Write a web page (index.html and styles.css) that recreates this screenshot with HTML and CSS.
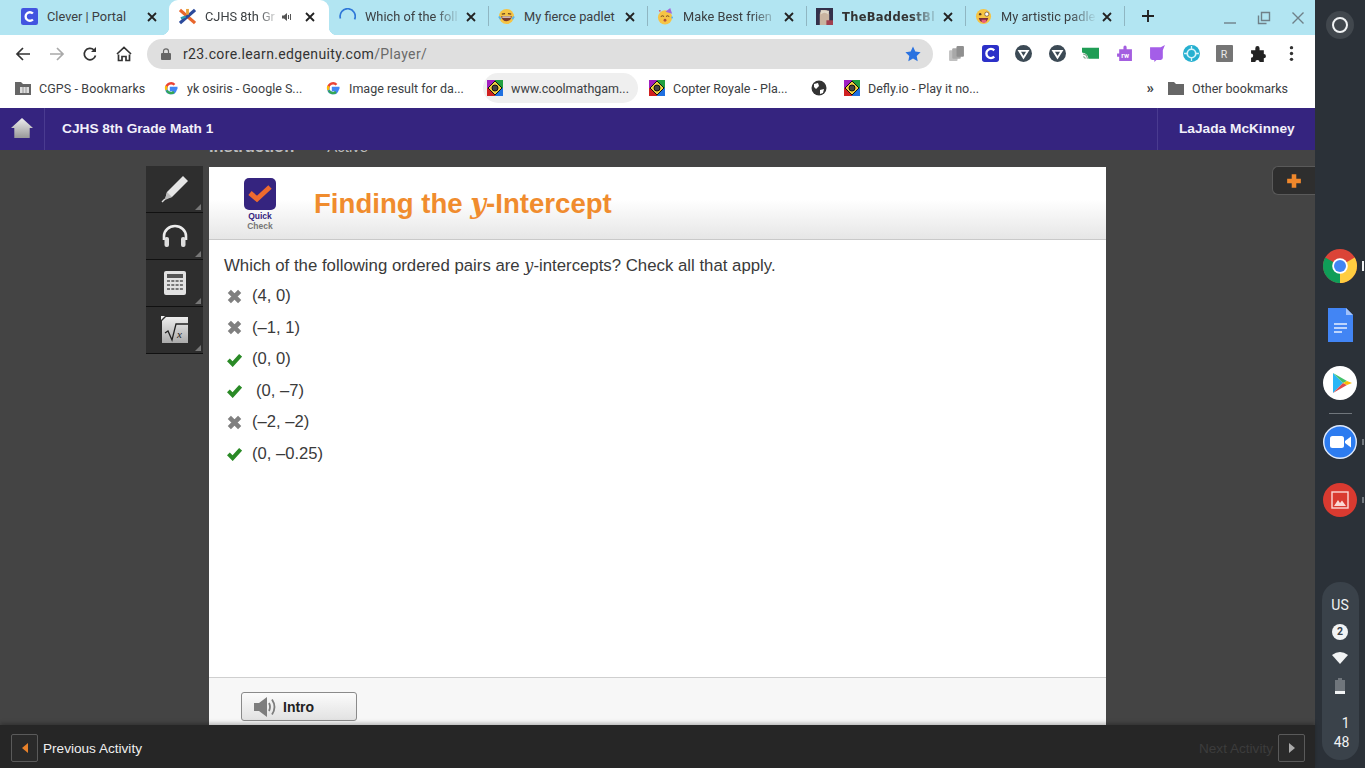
FILE: index.html
```html
<!DOCTYPE html>
<html lang="en">
<head>
<meta charset="utf-8">
<title>CJHS 8th Grade Math 1</title>
<link rel="stylesheet" href="styles.css">
</head>
<body>
<div class="screen">
  <div class="browser">
    <div class="tabstrip">
      <div class="tab first">
        <svg class="fav" viewBox="0 0 16 16"><rect width="16" height="16" rx="2" fill="#4254e0"/><path d="M11.2 5.2A4 4 0 1 0 11.2 10.8" fill="none" stroke="#fff" stroke-width="2.2"/></svg>
        <span class="tab-title">Clever | Portal</span>
        <svg class="close" viewBox="0 0 10 10"><path d="M1 1L9 9M9 1L1 9"/></svg>
      </div>
      <div class="tab active">
        <svg class="fav" viewBox="0 0 18 18"><path d="M1 2L17 16" stroke="#e8662c" stroke-width="3.4"/><path d="M17 2L1 16" stroke="#2b4a9c" stroke-width="3.4"/><path d="M9 1V7" stroke="#e8a33c" stroke-width="3"/><path d="M2 11L7 9" stroke="#2c9cb0" stroke-width="2.4"/></svg>
        <span class="tab-title short fade">CJHS 8th Gr</span>
        <svg class="speaker" viewBox="0 0 10 10"><path d="M0 3.5H2L5 1V9L2 6.5H0Z" fill="#555"/><path d="M6.5 3V7M8.5 2V8" stroke="#555" stroke-width="1"/></svg>
        <svg class="close" viewBox="0 0 10 10"><path d="M1 1L9 9M9 1L1 9"/></svg>
      </div>
      <div class="tab">
        <svg class="fav" viewBox="0 0 18 18"><path d="M1.500 11A8 8 0 1 1 16.500 12" fill="none" stroke="#2f78d8" stroke-width="1.800"/></svg>
        <span class="tab-title fade">Which of the foll</span>
        <svg class="close" viewBox="0 0 10 10"><path d="M1 1L9 9M9 1L1 9"/></svg>
      </div>
      <div class="tab sep">
        <svg class="fav" viewBox="0 0 18 18"><circle cx="9" cy="9" r="8" fill="#f6c445"/><path d="M3.5 8.5H14.5A5.5 5.5 0 0 1 3.5 8.5Z" fill="#7a3a2c"/><path d="M4.5 9H13.500V10.200H4.500Z" fill="#fff"/><path d="M4 6.500L7.500 6M14 6.500L10.500 6" stroke="#6a4020" stroke-width="1.300"/><path d="M1 9L3 12M17 9L15 12" stroke="#5ab4ea" stroke-width="2"/></svg>
        <span class="tab-title">My fierce padlet</span>
        <svg class="close" viewBox="0 0 10 10"><path d="M1 1L9 9M9 1L1 9"/></svg>
      </div>
      <div class="tab sep">
        <svg class="fav" viewBox="0 0 18 18"><circle cx="8.500" cy="10" r="7.500" fill="#f6c445"/><path d="M9 4L14 0L16 6Z" fill="#a06ad8"/><circle cx="3" cy="3" r="1" fill="#e0506a"/><circle cx="16" cy="10" r="1" fill="#5ab4ea"/><path d="M4 9Q6 7.500 7.500 9M9.500 9Q11 7.500 13 9" stroke="#6a4020" fill="none"/><circle cx="8.500" cy="13" r="1.500" fill="#b0503a"/></svg>
        <span class="tab-title fade">Make Best frien</span>
        <svg class="close" viewBox="0 0 10 10"><path d="M1 1L9 9M9 1L1 9"/></svg>
      </div>
      <div class="tab sep">
        <svg class="fav square" viewBox="0 0 18 18"><rect width="18" height="18" fill="#33304a"/><path d="M4 18V7Q4 2 9 2Q14 2 14 7V18Z" fill="#c9b4a0"/><path d="M5 7Q9 3 13 7L14 3L5 2Z" fill="#e0d8c8"/><rect x="11" y="13" width="7" height="5" fill="#a04050"/></svg>
        <span class="tab-title fancy fade">TheBaddestBl</span>
        <svg class="close" viewBox="0 0 10 10"><path d="M1 1L9 9M9 1L1 9"/></svg>
      </div>
      <div class="tab sep">
        <svg class="fav" viewBox="0 0 18 18"><circle cx="9" cy="9" r="8" fill="#f6c445"/><circle cx="5.500" cy="6.500" r="1.300" fill="#5a3a20"/><circle cx="12.500" cy="6.500" r="2.200" fill="#fff" stroke="#5a3a20" stroke-width=".7"/><path d="M4 10.500H14Q13 15 9 15Q5 15 4 10.500Z" fill="#7a2c3a"/><path d="M7 12.500H12V14.500Q9.500 17 7 14.500Z" fill="#e8607a"/></svg>
        <span class="tab-title fade">My artistic padle</span>
        <svg class="close" viewBox="0 0 10 10"><path d="M1 1L9 9M9 1L1 9"/></svg>
      </div>
      <div class="tab-end"></div>
      <svg class="newtab" viewBox="0 0 14 14"><path d="M7 1V13M1 7H13"/></svg>
      <div class="winctl">
        <svg viewBox="0 0 14 14"><path d="M1 12H13" stroke="#6f8088" stroke-width="1.400"/></svg>
        <svg viewBox="0 0 14 14"><path d="M1.500 4.500V12.500H9.500M4.500 1.500H12.500V9.500H4.500Z" fill="none" stroke="#6f8088" stroke-width="1.400"/></svg>
        <svg viewBox="0 0 14 14"><path d="M1.500 1.500L12.500 12.500M12.500 1.500L1.500 12.500" stroke="#6f8088" stroke-width="1.400"/></svg>
      </div>
    </div>

    <div class="toolbar">
      <svg class="nav" viewBox="0 0 16 16"><path d="M15 8H2M8 2L2 8L8 14" fill="none" stroke="#333" stroke-width="1.700"/></svg>
      <svg class="nav" viewBox="0 0 16 16"><path d="M1 8H14M8 2L14 8L8 14" fill="none" stroke="#a9a9a9" stroke-width="1.700"/></svg>
      <svg class="nav" viewBox="0 0 16 16"><path d="M13.500 9.500A5.700 5.700 0 1 1 12 4" fill="none" stroke="#333" stroke-width="1.700"/><path d="M14 1V6H9Z" fill="#333"/></svg>
      <svg class="nav" viewBox="0 0 16 16"><path d="M2.500 8.500V14.500H6V10.500H10V14.500H13.500V8.500M1 8L8 1.500L15 8" fill="none" stroke="#333" stroke-width="1.700"/></svg>
      <div class="omnibox">
        <svg class="lock" viewBox="0 0 10 12"><path d="M2.500 5V3.300A2.500 2.500 0 0 1 7.500 3.300V5" fill="none" stroke="#666" stroke-width="1.200"/><rect y="5" width="10" height="7" rx="1" fill="#666"/></svg>
        <span class="url">r23.core.learn.edgenuity.com<span class="url-path">/Player/</span></span>
        <svg class="star" viewBox="0 0 16 16"><path d="M8 .5L10.300 5.600L15.600 6.200L11.700 9.900L12.700 15.300L8 12.600L3.300 15.300L4.300 9.900L.4 6.200L5.700 5.600Z" fill="#2a72e0"/></svg>
      </div>
      <div class="ext-row">
        <svg viewBox="0 0 16 16"><rect x="1" y="5" width="8" height="10" rx="1" fill="#c0c0c0"/><rect x="4" y="3" width="8" height="10" rx="1" fill="#a8a8a8"/><rect x="8" y="1" width="7" height="10" rx="1" fill="#8f8f8f"/></svg>
        <svg viewBox="0 0 16 16"><rect width="16" height="16" rx="2.500" fill="#2c30c8"/><path d="M11.500 5A4.300 4.300 0 1 0 11.500 11" fill="none" stroke="#fff" stroke-width="2.200"/></svg>
        <svg viewBox="0 0 16 16"><circle cx="8" cy="8" r="8" fill="#3c4a55"/><path d="M4 5.500H12L8 12Z" fill="none" stroke="#fff" stroke-width="1.800"/></svg>
        <svg viewBox="0 0 16 16"><circle cx="8" cy="8" r="8" fill="#3c4a55"/><path d="M4 5.500H12L8 12Z" fill="none" stroke="#fff" stroke-width="1.800"/></svg>
        <svg viewBox="0 0 16 16"><path d="M0 2.500H16V13H6Q6 8 0 7Z" fill="#1f9d55"/><path d="M1 8.500A4.500 4.500 0 0 1 5 13M1 11A2 2 0 0 1 3 13" fill="none" stroke="#7d9d88" stroke-width="1"/></svg>
        <svg viewBox="0 0 16 16"><path d="M3 4H7V2A1.500 1.500 0 0 1 10 2V4H15V15H3V11H1V8H3Z" fill="#a45ee0"/><text class="rw" x="5" y="12">rw</text></svg>
        <svg viewBox="0 0 16 16"><path d="M1 2H11L15 0L13 5V12Q13 14 11 14H7L5 16V14H3Q1 14 1 12Z" fill="#a45ee8"/></svg>
        <svg viewBox="0 0 16 16"><circle cx="8" cy="8" r="8" fill="#26b0d0"/><circle cx="8" cy="8" r="4" fill="none" stroke="#d8f4fa" stroke-width="1.600"/><path d="M8 1V4M8 12V15M1 8H4M12 8H15" stroke="#d8f4fa" stroke-width="1.200"/></svg>
        <svg viewBox="0 0 16 16"><rect width="16" height="16" rx="1" fill="#757575"/><text class="rlet" x="4.500" y="12">R</text></svg>
        <svg viewBox="0 0 16 16"><path d="M1 5H5V3A2 2 0 0 1 9 3V5H13V8.500A2 2 0 0 1 13 12.500V16H9A2 2 0 0 0 5 16H1V12A2 2 0 0 0 1 8Z" fill="#222"/></svg>
        <svg viewBox="0 0 16 16"><circle cx="8" cy="2.500" r="1.600" fill="#333"/><circle cx="8" cy="8" r="1.600" fill="#333"/><circle cx="8" cy="13.500" r="1.600" fill="#333"/></svg>
      </div>
    </div>

    <div class="bookmarks">
      <div class="bm first">
        <svg class="bm-ic" viewBox="0 0 16 14"><path d="M0 1H6L8 3H16V14H0Z" fill="#666"/><path d="M5 6H14V12H5Z" fill="#ddd"/><path d="M8 6V12M11 6V12" stroke="#888" stroke-width=".8"/></svg>
        <span>CGPS - Bookmarks</span>
      </div>
      <div class="bm">
        <svg class="bm-ic" viewBox="0 0 16 16"><path d="M14.500 8H8V10H12.500A4.700 4.700 0 0 1 3.400 8" fill="none" stroke="#4285f4" stroke-width="2.400"/><path d="M3.300 8A4.700 4.700 0 0 1 11.500 4.800" fill="none" stroke="#ea4335" stroke-width="2.400"/><path d="M3.400 6A4.700 4.700 0 0 0 3.500 10" fill="none" stroke="#fbbc05" stroke-width="2.400"/><path d="M3.800 10.500A4.700 4.700 0 0 0 11 12" fill="none" stroke="#34a853" stroke-width="2.400"/></svg>
        <span>yk osiris - Google S...</span>
      </div>
      <div class="bm">
        <svg class="bm-ic" viewBox="0 0 16 16"><path d="M14.500 8H8V10H12.500A4.700 4.700 0 0 1 3.400 8" fill="none" stroke="#4285f4" stroke-width="2.400"/><path d="M3.300 8A4.700 4.700 0 0 1 11.500 4.800" fill="none" stroke="#ea4335" stroke-width="2.400"/><path d="M3.400 6A4.700 4.700 0 0 0 3.500 10" fill="none" stroke="#fbbc05" stroke-width="2.400"/><path d="M3.800 10.500A4.700 4.700 0 0 0 11 12" fill="none" stroke="#34a853" stroke-width="2.400"/></svg>
        <span>Image result for da...</span>
      </div>
      <div class="bm hover">
        <svg class="bm-ic" viewBox="0 0 16 16"><rect width="8" height="8" fill="#a020c0"/><rect x="8" width="8" height="8" fill="#20a040"/><rect y="8" width="8" height="8" fill="#d02020"/><rect x="8" y="8" width="8" height="8" fill="#2070e0"/><path d="M8 1L15 8L8 15L1 8Z" fill="#f0d040" stroke="#111"/><circle cx="8" cy="8" r="3" fill="#444" stroke="#111"/></svg>
        <span>www.coolmathgam...</span>
      </div>
      <div class="bm">
        <svg class="bm-ic" viewBox="0 0 16 16"><rect width="8" height="8" fill="#a020c0"/><rect x="8" width="8" height="8" fill="#20a040"/><rect y="8" width="8" height="8" fill="#d02020"/><rect x="8" y="8" width="8" height="8" fill="#2070e0"/><path d="M8 1L15 8L8 15L1 8Z" fill="#f0d040" stroke="#111"/><circle cx="8" cy="8" r="3" fill="#444" stroke="#111"/></svg>
        <span>Copter Royale - Pla...</span>
      </div>
      <div class="bm globe">
        <svg class="bm-ic" viewBox="0 0 16 16"><circle cx="8" cy="8" r="7.500" fill="#333"/><path d="M3 4L7 3L8 6L5 9L3 7ZM9 10L13 9L12 13L9 14Z" fill="#fff"/></svg>
      </div>
      <div class="bm">
        <svg class="bm-ic" viewBox="0 0 16 16"><rect width="8" height="8" fill="#a020c0"/><rect x="8" width="8" height="8" fill="#20a040"/><rect y="8" width="8" height="8" fill="#d02020"/><rect x="8" y="8" width="8" height="8" fill="#2070e0"/><path d="M8 1L15 8L8 15L1 8Z" fill="#f0d040" stroke="#111"/><circle cx="8" cy="8" r="3" fill="#444" stroke="#111"/></svg>
        <span>Defly.io - Play it no...</span>
      </div>
      <div class="bm-right">
        <span class="more">»</span>
        <svg class="bm-ic" viewBox="0 0 16 14"><path d="M0 1H6L8 3H16V14H0Z" fill="#666"/></svg>
        <span>Other bookmarks</span>
      </div>
    </div>

    <div class="app">
      <header class="app-head">
        <div class="home">
          <svg viewBox="0 0 20 20"><defs><linearGradient id="homeg" x1="0" y1="0" x2="0" y2="1"><stop offset="0" stop-color="#eee"/><stop offset="1" stop-color="#999"/></linearGradient></defs><path d="M10 1L20 10H17V19H3V10H0Z" fill="url(#homeg)"/></svg>
        </div>
        <div class="course">CJHS 8th Grade Math 1</div>
        <div class="user">LaJada McKinney</div>
      </header>
      <div class="stage">
        <div class="peek"><span>Instruction</span><span class="peek-b">Active</span></div>
        <div class="tools">
          <div class="tool">
            <svg viewBox="0 0 28 28"><path d="M22 1L27 6L11 22L4 24L6 17Z" fill="#e6e6e6"/><path d="M6 17L11 22L4 25Z" fill="#bbb"/><path d="M1 27L4 24" stroke="#ddd" stroke-width="1.500"/></svg>
          </div>
          <div class="tool">
            <svg viewBox="0 0 28 24"><path d="M3 16V12A11 10 0 0 1 25 12V16" fill="none" stroke="#ececec" stroke-width="2.600"/><rect x="3.500" y="13" width="4.500" height="10" rx="2" fill="#ddd"/><rect x="20" y="13" width="4.500" height="10" rx="2" fill="#ddd"/></svg>
          </div>
          <div class="tool">
            <svg class="calc" viewBox="0 0 22 24"><rect width="22" height="24" rx="2" fill="#e2e2e2"/><rect x="3" y="3" width="16" height="4" fill="#555"/><path d="M3 10H19M3 14H19M3 18H19" stroke="#777" stroke-width="2" stroke-dasharray="3 1.300"/></svg>
          </div>
          <div class="tool">
            <svg class="sqrt" viewBox="0 0 28 28"><defs><linearGradient id="sqg" x1="0" y1="0" x2="0" y2="1"><stop offset="0" stop-color="#eee"/><stop offset="1" stop-color="#aaa"/></linearGradient></defs><path d="M5 1H27V27H1V5Z" fill="url(#sqg)"/><path d="M0 0H4L0 4Z" fill="#eee"/><path d="M4 17L7 15L11 24L15 8H27" fill="none" stroke="#222" stroke-width="1.300"/><text class="sqrt-x" x="16" y="22">x</text></svg>
          </div>
        </div>
        <main class="panel">
          <div class="panel-head">
            <div class="qc">
              <svg class="qc-ic" viewBox="0 0 32 32"><rect width="32" height="32" rx="5" fill="#35247f"/><path d="M6 15L13 21L26 9" fill="none" stroke="#ee6a2e" stroke-width="5"/></svg>
              <div class="qc-a">Quick</div>
              <div class="qc-b">Check</div>
            </div>
            <h1 class="title">Finding the <i class="mvar">y</i>-Intercept</h1>
          </div>
          <div class="panel-body">
            <p class="question">Which of the following ordered pairs are <i class="qvar">y</i>-intercepts? Check all that apply.</p>
            <ul class="answers">
              <li><svg class="mark" viewBox="0 0 16 16"><path d="M2.500 2.500L13.500 13.500M13.500 2.500L2.500 13.500" stroke="#7f7f7f" stroke-width="4.800"/></svg><span>(4, 0)</span></li>
              <li><svg class="mark" viewBox="0 0 16 16"><path d="M2.500 2.500L13.500 13.500M13.500 2.500L2.500 13.500" stroke="#7f7f7f" stroke-width="4.800"/></svg><span>(–1, 1)</span></li>
              <li><svg class="mark" viewBox="0 0 16 16"><path d="M1.500 8.500L6 13L14.500 3.500" fill="none" stroke="#2a8a26" stroke-width="4.200"/></svg><span>(0, 0)</span></li>
              <li><svg class="mark" viewBox="0 0 16 16"><path d="M1.500 8.500L6 13L14.500 3.500" fill="none" stroke="#2a8a26" stroke-width="4.200"/></svg><span class="lead">(0, –7)</span></li>
              <li><svg class="mark" viewBox="0 0 16 16"><path d="M2.500 2.500L13.500 13.500M13.500 2.500L2.500 13.500" stroke="#7f7f7f" stroke-width="4.800"/></svg><span>(–2, –2)</span></li>
              <li><svg class="mark" viewBox="0 0 16 16"><path d="M1.500 8.500L6 13L14.500 3.500" fill="none" stroke="#2a8a26" stroke-width="4.200"/></svg><span>(0, –0.25)</span></li>
            </ul>
          </div>
          <div class="panel-foot">
            <button class="intro" type="button">
              <svg viewBox="0 0 22 20"><path d="M0 6H5L13 0V20L5 14H0Z" fill="#7d7d7d"/><path d="M15 6Q17 10 15 14M18 2.500Q23 10 18 17.500" fill="none" stroke="#7d7d7d" stroke-width="1.800"/></svg>
              <span>Intro</span>
            </button>
          </div>
        </main>
        <div class="plus-tab"><svg viewBox="0 0 14 14"><path d="M7 1V13M1 7H13" stroke="#f0882c" stroke-width="4"/></svg></div>
      </div>
      <footer class="app-foot">
        <div class="step"><svg viewBox="0 0 8 12"><path d="M7 1V11L1 6Z" fill="#e8812a"/></svg></div>
        <span class="prev">Previous Activity</span>
        <span class="next">Next Activity</span>
        <div class="step"><svg viewBox="0 0 8 12"><path d="M1 1V11L7 6Z" fill="#aaa"/></svg></div>
      </footer>
    </div>
  </div>

  <aside class="shelf">
    <div class="launcher"><span class="ring"></span></div>
    <div class="apps">
      <div class="app-item open"><svg viewBox="0 0 34 34"><circle cx="17" cy="17" r="17" fill="#db4437"/><path d="M17 17L2.300 8.500A17 17 0 0 0 17 34Z" fill="#0f9d58"/><path d="M17 17L17 34A17 17 0 0 0 31.700 8.500Z" fill="#ffcd40"/><circle cx="17" cy="17" r="7.800" fill="#fff"/><circle cx="17" cy="17" r="6" fill="#4285f4"/></svg></div>
      <div class="app-item"><svg viewBox="0 0 34 34"><path d="M5 0H23L30 7V34H5Z" fill="#4285f4"/><path d="M23 0V7H30Z" fill="#a1c2fa"/><path d="M11 16H24M11 20H24M11 24H19" stroke="#e8f0fe" stroke-width="1.500"/></svg></div>
      <div class="app-item"><svg viewBox="0 0 34 34"><circle cx="17" cy="17" r="17" fill="#fff"/><path d="M10 7V27L20 17Z" fill="#29b6f6"/><path d="M10 7L24 15L20 17Z" fill="#43c16b"/><path d="M10 27L24 19L20 17Z" fill="#e04b4b"/><path d="M24 15L29 17L24 19L20 17Z" fill="#fbbc05"/></svg></div>
      <hr class="divider">
      <div class="app-item running"><svg viewBox="0 0 34 34"><circle cx="17" cy="17" r="16.300" fill="#2d7cf0" stroke="#dfe9fb" stroke-width="1.400"/><rect x="7" y="11" width="14" height="12" rx="2.500" fill="#fff"/><path d="M22 16L28 11.500V22.500L22 18Z" fill="#fff"/></svg></div>
      <div class="app-item running"><svg viewBox="0 0 34 34"><circle cx="17" cy="17" r="17" fill="#d93a30"/><rect x="9" y="9" width="16" height="16" fill="none" stroke="#fbd8d4" stroke-width="1.400"/><path d="M11 23L15 17L17 20L19 17.500L23 23Z" fill="#fbd8d4"/></svg></div>
    </div>
    <div class="tray">
      <div class="lang">US</div>
      <div class="badge">2</div>
      <svg class="wifi" viewBox="0 0 16 12"><path d="M0 3Q8 -3 16 3L8 12Z" fill="#f1f3f4"/></svg>
      <svg class="batt" viewBox="0 0 10 16"><path d="M3 0H7V2H10V16H0V2H3Z" fill="#70767c"/><rect y="13" width="10" height="3" fill="#f1f3f4"/></svg>
      <div class="clock"><div class="hour">1</div><div>48</div></div>
    </div>
  </aside>
</div>
</body>
</html>
```

FILE: styles.css
```css
* { box-sizing: border-box; }
html, body { margin: 0; padding: 0; height: 768px; overflow: hidden; }
body { font-family: "Liberation Sans", Arial, sans-serif; background: #2b3138; }

.screen { display: flex; width: 1365px; height: 768px; }
.browser { width: 1315px; display: flex; flex-direction: column; }

/* Tab strip */
.tabstrip { height: 35px; background: #b2e5f2; display: flex; align-items: stretch; font: 12.800px Roboto, sans-serif; color: #3c4043; }
.tab { width: 159px; display: flex; align-items: center; padding: 0 12px 2px 10px; position: relative; flex: none; }
.tab.first { margin-left: 11px; width: 158px; }
.tab.active { background: #fff; border-radius: 9px 9px 0 0; width: 160px; color: #3c4043; }
.tab.active::before, .tab.active::after { content: ""; position: absolute; bottom: 0; width: 8px; height: 8px; }
.tab.active::before { left: -8px; background: radial-gradient(circle at 0 0, transparent 8px, #fff 8.500px); }
.tab.active::after { right: -8px; background: radial-gradient(circle at 100% 0, transparent 8px, #fff 8.500px); }
.tab.sep::before, .tab-end { content: ""; width: 1px; height: 20px; background: #8fb6c2; }
.tab.sep::before { position: absolute; left: 0; top: 6px; }
.tab-end { align-self: center; flex: none; margin-top: -3px; }
.fav { width: 17px; height: 17px; flex: none; }
.tab-title { margin-left: 9px; flex: 1; min-width: 0; white-space: nowrap; overflow: hidden; }
.tab-title.fade { -webkit-mask-image: linear-gradient(90deg, #000 72%, transparent 100%); mask-image: linear-gradient(90deg, #000 72%, transparent 100%); }
.tab-title.short { flex: none; width: 74px; margin-right: 3px; }
.tab-title.fancy { font-weight: 700; font-family: "DejaVu Sans", sans-serif; font-size: 11.500px; letter-spacing: .3px; color: #333; }
.close { width: 10px; height: 10px; flex: none; margin-left: 5px; }
.active .close { margin-left: 13px; }
.close path { stroke: #222; stroke-width: 1.800; fill: none; }
.speaker { width: 10px; height: 10px; flex: none; }
.newtab { width: 14px; height: 14px; margin: 0 0 3px 16px; align-self: center; flex: none; }
.newtab path { stroke: #222; stroke-width: 1.900; fill: none; }
.winctl { margin-left: auto; display: flex; gap: 20px; padding-right: 10px; align-items: center; }
.winctl svg { width: 14px; height: 14px; }

/* Toolbar */
.toolbar { height: 37px; background: #fff; display: flex; align-items: center; padding-left: 15px; }
.nav { width: 16px; height: 16px; flex: none; margin-right: 17.500px; }
.nav:last-of-type { margin-right: 15.500px; }
.omnibox { width: 786px; height: 30px; border-radius: 15px; background: #dfdfdf; display: flex; align-items: center; padding: 0 12px 0 14px; margin-left: 0; flex: none; }
.lock { width: 10px; height: 12px; flex: none; }
.url { margin-left: 12px; font: 14px Roboto, sans-serif; color: #333; letter-spacing: .026em; }
.url-path { color: #6a6a6a; }
.star { width: 16px; height: 16px; margin-left: auto; }
.ext-row { display: flex; align-items: center; gap: 16.500px; margin-left: 15px; }
.ext-row svg { width: 17px; height: 17px; flex: none; }
.rw { font: 700 6.500px Roboto, sans-serif; fill: #fff; }
.rlet { font: 10px Roboto, sans-serif; fill: #e8e8e8; }

/* Bookmarks */
.bookmarks { height: 36px; background: #fff; display: flex; align-items: center; padding: 0 0 4px 11px; font: 12.500px Roboto, sans-serif; color: #3c4043; }
.bm { display: flex; align-items: center; gap: 8px; width: 155px; height: 30px; padding: 0 4px; border-radius: 15px; margin-right: 7px; white-space: nowrap; flex: none; }
.bm.first { width: 141px; letter-spacing: .1px; }
.bm.hover { background: #efefef; }
.bm.globe { width: 26px; }
.bm-ic { width: 16px; height: 16px; flex: none; }
.bm-right { margin-left: auto; display: flex; align-items: center; gap: 8px; padding-right: 27px; }
.more { font-size: 15px; font-weight: 700; margin-right: 6px; }

/* App chrome */
.app { flex: 1; display: flex; flex-direction: column; min-height: 0; background: #444; }
.app-head { height: 42px; background: #35247f; display: flex; align-items: center; color: #f2f0fa; font-weight: 700; font-size: 13.700px; flex: none; position: relative; z-index: 2; }
.home { width: 45px; height: 100%; display: flex; align-items: center; justify-content: center; border-right: 1px solid #4a3b90; }
.home svg { width: 22px; height: 22px; margin-bottom: 2px; }
.course { padding: 0 0 2px 17px; flex: 1; }
.user { width: 158px; height: 100%; display: flex; align-items: center; padding: 0 0 2px 21px; border-left: 1px solid #4a3b90; }

.stage { flex: 1; min-height: 0; display: flex; align-items: flex-start; padding: 16px 0 0 146px; gap: 6px; position: relative; overflow: hidden; background: #444; }
.peek { position: absolute; left: 209px; top: -13px; display: flex; gap: 33px; font-size: 16.500px; font-weight: 700; color: #bdbdbd; }
.peek-b { font-size: 15px; font-weight: 400; padding-top: 1px; }

.tools { width: 57px; flex: none; display: flex; flex-direction: column; }
.tool { height: 47px; background: #2e2e2e; border-bottom: 1px solid #111; display: flex; align-items: center; justify-content: center; position: relative; padding-bottom: 1px; }
.tool::after { content: ""; position: absolute; right: 2px; bottom: 2px; border-style: solid; border-width: 0 0 6px 6px; border-color: transparent transparent #777 transparent; }
.tool svg { width: 28px; height: 28px; }
.tool svg.calc { width: 22px; height: 24px; }
.sqrt-x { font: italic 11px "Liberation Serif", serif; fill: #222; }

.panel { width: 897px; height: 558px; margin-top: 1px; background: #fff; display: flex; flex-direction: column; flex: none; }
.panel-head { height: 73px; flex: none; display: flex; align-items: center; border-bottom: 1px solid #c9c9c9; background: linear-gradient(180deg, #fff 0%, #fff 45%, #e6e6e6 100%); padding-left: 35px; }
.qc { width: 32px; display: flex; flex-direction: column; align-items: center; padding-top: 2px; font-size: 8.500px; font-weight: 700; line-height: 10px; }
.qc-ic { width: 32px; height: 32px; margin-bottom: 1px; }
.qc-a { color: #35247f; }
.qc-b { color: #777; }
.title { margin: 2px 0 0 38px; font-size: 27.600px; font-weight: 700; color: #f08c2e; line-height: 1; }
.mvar { font-family: "DejaVu Serif", serif; font-size: 27px; font-weight: 700; }
.panel-body { flex: 1; min-height: 0; padding: 16px 15px 0; color: #3a3a3a; font-size: 16.800px; }
.question { margin: 0; line-height: 20px; }
.qvar { font-family: "DejaVu Serif", serif; font-size: 16px; }
.answers { list-style: none; margin: 4.500px 0 0; padding: 0; font-size: 16.600px; }
.answers li { height: 31.500px; display: flex; align-items: center; gap: 10px; padding-left: 3px; }
.mark { width: 15px; height: 15px; flex: none; }
.lead { margin-left: 4px; }
.panel-foot { height: 48px; flex: none; border-top: 1px solid #cfcfcf; background: #f7f7f7; padding: 14px 0 0 32px; }
.intro { width: 116px; height: 29px; padding: 0 0 0 12px; border: 1px solid #8a8a8a; border-radius: 3px; background: linear-gradient(180deg, #fbfbfb, #e2e2e2); display: flex; align-items: center; gap: 7px; font: 700 14px "Liberation Sans", sans-serif; color: #222; }
.intro svg { width: 22px; height: 20px; }

.plus-tab { position: absolute; right: 0; top: 16px; width: 43px; height: 29px; background: #2e2e2e; border: 1px solid #5a5a5a; border-right: 0; border-radius: 6px 0 0 6px; display: flex; align-items: center; justify-content: center; }
.plus-tab svg { width: 16px; height: 16px; }

.app-foot { height: 43px; flex: none; background: #262626; display: flex; align-items: center; padding: 3px 10px 0 11px; font-size: 13.600px; position: relative; box-shadow: 0 -2px 4px rgba(0,0,0,.25); }
.step { width: 27px; height: 28px; border: 1px solid #5a5a5a; border-radius: 2px; background: #2a2a2a; display: flex; align-items: center; justify-content: center; flex: none; }
.step svg { width: 8px; height: 12px; }
.prev { margin-left: 5px; color: #eee; }
.next { margin-left: auto; margin-right: 5px; color: #3c3c3c; }

/* Shelf */
.shelf { width: 50px; flex: none; background: #2b3138; display: flex; flex-direction: column; align-items: center; }
.launcher { width: 28px; height: 28px; margin-top: 11px; border-radius: 50%; background: #41474d; display: flex; align-items: center; justify-content: center; }
.ring { width: 16px; height: 16px; border: 2px solid #f1f3f4; border-radius: 50%; }
.apps { margin-top: 210px; display: flex; flex-direction: column; align-items: center; gap: 24.500px; }
.app-item { width: 34px; height: 34px; position: relative; }
.app-item svg { width: 34px; height: 34px; display: block; }
.app-item.open::after, .app-item.running::after { content: ""; position: absolute; left: 39px; width: 2px; background: #70767c; top: 14px; height: 6px; }
.app-item.open::after { top: 12px; height: 10px; background: #f1f3f4; }
.divider { width: 23px; height: 1px; margin: -11.500px 0 -14px; border: 0; background: #70767c; }
.tray { margin-top: 65px; width: 37px; height: 178px; border-radius: 18px; background: #3a424a; display: flex; flex-direction: column; align-items: center; padding-top: 15px; color: #f1f3f4; font: 14px Roboto, sans-serif; flex: none; }
.lang { line-height: 16px; }
.badge { width: 16px; height: 16px; margin-top: 11px; border-radius: 50%; background: #f1f3f4; color: #3a424a; font: 700 10.500px/16px Roboto, sans-serif; text-align: center; }
.wifi { width: 16px; height: 12px; margin-top: 12px; }
.batt { width: 10px; height: 16px; margin-top: 14px; }
.clock { margin-top: 20px; line-height: 19px; width: 100%; padding-right: 9px; text-align: right; }
```
